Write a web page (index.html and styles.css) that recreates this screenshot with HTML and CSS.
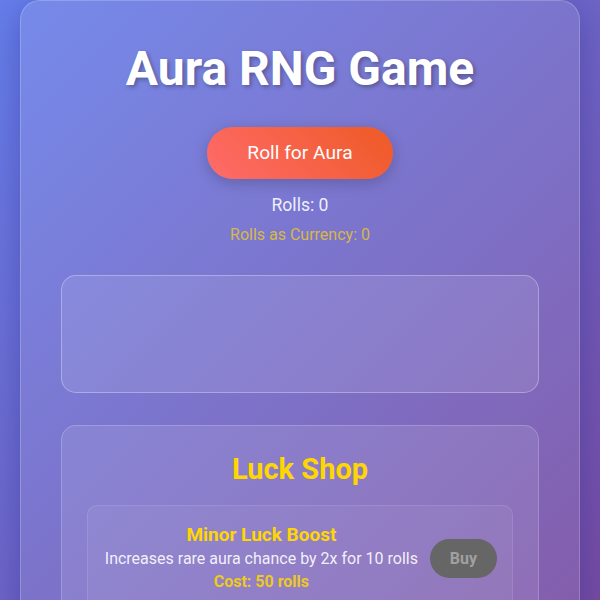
FILE: index.html
```html
<!DOCTYPE html>
<html lang="en">
<head>
<meta charset="utf-8">
<title>Aura RNG Game</title>
<link rel="stylesheet" href="styles.css">
</head>
<body>
<div class="container">
  <h1 class="title">Aura RNG Game</h1>
  <button class="roll-btn">Roll for Aura</button>
  <p class="rolls">Rolls: 0</p>
  <p class="currency">Rolls as Currency: 0</p>
  <div class="aura-display"></div>
  <div class="shop">
    <h2 class="shop-title">Luck Shop</h2>
    <div class="shop-item">
      <div class="item-info">
        <div class="item-name">Minor Luck Boost</div>
        <div class="item-desc">Increases rare aura chance by 2x for 10 rolls</div>
        <div class="item-cost">Cost: 50 rolls</div>
      </div>
      <button class="buy-btn" disabled>Buy</button>
    </div>
  </div>
</div>
</body>
</html>
```
FILE: styles.css
```css
* { box-sizing: border-box; }
html, body { height: 100%; }
body {
  margin: 0;
  padding: 0 20px 20px;
  font-family: Roboto, "Liberation Sans", sans-serif;
  color: #fff;
  background: linear-gradient(135deg, #667eea 0%, #764ba2 100%);
  background-attachment: fixed;
}
.container {
  max-width: 560px;
  margin: 0 auto;
  padding: 40px;
  text-align: center;
  background: rgba(255, 255, 255, 0.1);
  border: 1px solid rgba(255, 255, 255, 0.2);
  border-radius: 20px;
  box-shadow: 0 8px 32px rgba(31, 38, 135, 0.37);
}
.title {
  margin: 0 0 30px;
  font-size: 48px;
  font-weight: 700;
  line-height: 56px;
  text-shadow: 2px 2px 4px rgba(0, 0, 0, 0.3);
}
.roll-btn {
  font-family: inherit;
  font-size: 19.2px;
  line-height: 22px;
  color: #fff;
  padding: 15px 40px;
  border: none;
  border-radius: 50px;
  background: linear-gradient(45deg, #ff6b6b, #ee5a24);
  box-shadow: 0 4px 15px rgba(0, 0, 0, 0.2);
  cursor: pointer;
}
.rolls {
  margin: 16px 0 0;
  font-size: 17.6px;
  line-height: 20px;
  color: rgba(255, 255, 255, 0.9);
}
.currency {
  margin: 10px 0 0;
  font-size: 16px;
  line-height: 20px;
  color: rgba(255, 215, 0, 0.7);
}
.aura-display {
  margin-top: 30px;
  height: 118px;
  background: rgba(255, 255, 255, 0.1);
  border: 1px solid rgba(255, 255, 255, 0.3);
  border-radius: 15px;
}
.shop {
  margin-top: 32px;
  padding: 21px 25px 25px;
  background: rgba(255, 255, 255, 0.1);
  border: 1px solid rgba(255, 255, 255, 0.2);
  border-radius: 15px;
}
.shop-title {
  margin: 0 0 14px;
  font-size: 29px;
  line-height: 44px;
  font-weight: 700;
  color: #ffd700;
}
.shop-item {
  display: flex;
  align-items: center;
  justify-content: space-between;
  gap: 10px;
  padding: 18px 15px 15px;
  background: rgba(255, 255, 255, 0.05);
  border: 1px solid rgba(255, 255, 255, 0.1);
  border-radius: 10px;
}
.item-info { flex: 1; }
.item-name {
  font-size: 19px;
  font-weight: 700;
  line-height: 22px;
  color: #ffd700;
}
.item-desc {
  font-size: 16px;
  line-height: 26px;
  color: rgba(255, 255, 255, 0.9);
}
.item-cost {
  font-size: 16px;
  font-weight: 700;
  line-height: 20px;
  color: #ffd700;
  opacity: 0.85;
}
.buy-btn {
  font-family: inherit;
  font-size: 16px;
  font-weight: 700;
  line-height: 19px;
  color: #a0a0a0;
  padding: 10px 20px;
  border: none;
  border-radius: 20px;
  background: #666;
}
```
